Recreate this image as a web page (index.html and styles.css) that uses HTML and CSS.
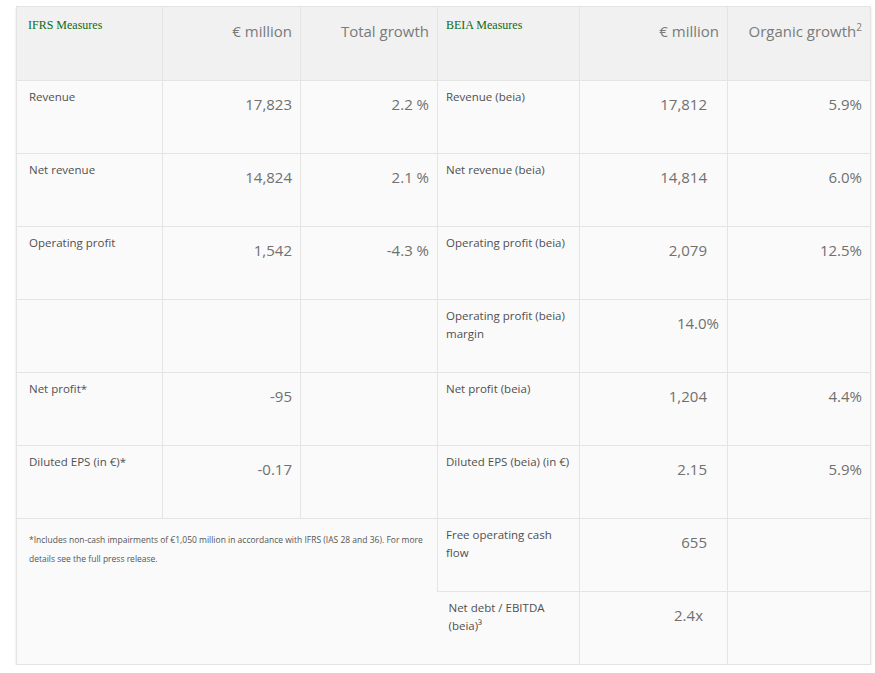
FILE: index.html
```html
<!DOCTYPE html>
<html>
<head>
<meta charset="utf-8">
<link rel="stylesheet" href="styles.css">
</head>
<body>
<table class="kpi">
  <colgroup>
    <col class="c1"><col class="c2"><col class="c3"><col class="c4"><col class="c5"><col class="c6">
  </colgroup>
  <thead>
    <tr class="head">
      <th class="title">IFRS Measures</th>
      <th class="hnum">€ million</th>
      <th class="hnum">Total growth</th>
      <th class="title b">BEIA Measures</th>
      <th class="hnum">€ million</th>
      <th class="hnum">Organic growth<sup>2</sup></th>
    </tr>
  </thead>
  <tbody>
    <tr>
      <td class="lab">Revenue</td><td class="num">17,823</td><td class="num">2.2 %</td>
      <td class="lab r">Revenue (beia)</td><td class="num w">17,812</td><td class="num">5.9%</td>
    </tr>
    <tr>
      <td class="lab">Net revenue</td><td class="num">14,824</td><td class="num">2.1 %</td>
      <td class="lab r">Net revenue (beia)</td><td class="num w">14,814</td><td class="num">6.0%</td>
    </tr>
    <tr>
      <td class="lab">Operating profit</td><td class="num">1,542</td><td class="num">-4.3 %</td>
      <td class="lab r">Operating profit (beia)</td><td class="num w">2,079</td><td class="num">12.5%</td>
    </tr>
    <tr>
      <td class="lab"></td><td class="num"></td><td class="num"></td>
      <td class="lab r">Operating profit (beia) margin</td><td class="num">14.0%</td><td class="num"></td>
    </tr>
    <tr>
      <td class="lab">Net profit*</td><td class="num">-95</td><td class="num"></td>
      <td class="lab r">Net profit (beia)</td><td class="num w">1,204</td><td class="num">4.4%</td>
    </tr>
    <tr>
      <td class="lab">Diluted EPS (in €)*</td><td class="num">-0.17</td><td class="num"></td>
      <td class="lab r tight">Diluted EPS (beia) (in €)</td><td class="num w">2.15</td><td class="num">5.9%</td>
    </tr>
    <tr>
      <td class="note" colspan="3" rowspan="2">*Includes non-cash impairments of €1,050 million in accordance with IFRS (IAS 28 and 36). For more details see the full press release.</td>
      <td class="lab r">Free operating cash flow</td><td class="num w">655</td><td class="num"></td>
    </tr>
    <tr>
      <td class="lab r last">Net debt / EBITDA (beia)³</td><td class="num x">2.4x</td><td class="num"></td>
    </tr>
  </tbody>
</table>
</body>
</html>
```

FILE: styles.css
```css
html, body {
  margin: 0;
  padding: 0;
  background: #ffffff;
}
body {
  padding: 6px 5px 0 16px;
}
.kpi {
  width: 854px;
  table-layout: fixed;
  border-collapse: collapse;
  border: 1px solid #d2d2d2;
  box-shadow: 0 2px 2px rgba(0, 0, 0, 0.12);
  font-family: "Open Sans", sans-serif;
}
.c1 { width: 146px; }
.c2 { width: 138px; }
.c3 { width: 137px; }
.c4 { width: 142px; }
.c5 { width: 148px; }
.c6 { width: 143px; }

.kpi th, .kpi td {
  border: 1px solid #e4e4e4;
  vertical-align: top;
  padding: 0;
}
.head {
  height: 74px;
  background: #f1f1f1;
}
.kpi tbody tr {
  height: 73px;
  background: #fafafa;
}
.title {
  text-align: left;
  font-family: "Liberation Serif", serif;
  font-weight: normal;
  font-size: 12px;
  line-height: 14px;
  color: #0b6a14;
  padding: 11px 0 0 11px !important;
}
.title.b {
  padding-left: 8px !important;
}
.hnum {
  text-align: right;
  font-weight: normal;
  font-size: 15px;
  line-height: 22px;
  color: #7a7a7a;
  padding: 13px 8px 0 0 !important;
}
.hnum sup {
  font-size: 10px;
  line-height: 0;
  vertical-align: 6px;
}
.lab {
  font-size: 11.5px;
  line-height: 18px;
  color: #505050;
  padding: 7px 12px 0 12px !important;
}
.lab.r {
  padding: 7px 14px 0 8px !important;
}
.lab.tight {
  padding-right: 1px !important;
}
.lab.last {
  border-left: none;
  padding-left: 11px !important;
  padding-right: 12px !important;
}
.num {
  text-align: right;
  font-size: 15px;
  line-height: 22px;
  color: #707070;
  padding: 12px 8px 0 0 !important;
}
.num.w {
  padding-right: 20px !important;
}
.num.x {
  padding-right: 24px !important;
}
.kpi .note {
  border-right: none;
  font-size: 8.5px;
  line-height: 19px;
  color: #555555;
  padding: 11px 10px 0 12px;
}
.kpi .lab.last {
  border-left: none;
}
```
